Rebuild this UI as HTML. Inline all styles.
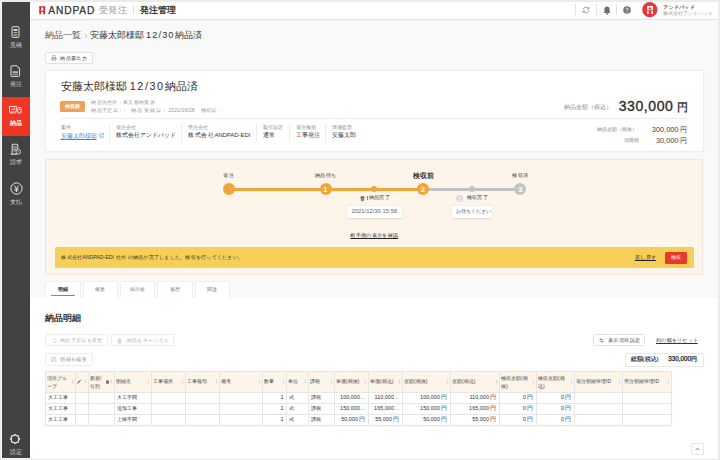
<!DOCTYPE html>
<html><head><meta charset="utf-8">
<style>
*{box-sizing:border-box;margin:0;padding:0}
html,body{width:720px;height:460px;overflow:hidden;background:#ebebeb;font-family:"Liberation Sans",sans-serif;color:#333}
.a{position:absolute}
#frame{position:absolute;left:1px;top:2px;width:717px;height:457px;background:#fafafa}
#side{position:absolute;left:2px;top:2px;width:28px;height:456px;background:#424242}
.si{position:absolute;left:0;width:28px;height:39px}
.si .lb{position:absolute;left:0;width:28px;text-align:center;top:22.6px;font-size:6.2px;line-height:7px;color:#dcdcdc;font-weight:500}
.si.act{background:#ee3626}
.si.act .lb{color:#fff;font-weight:bold}
#hdr{position:absolute;left:30px;top:2px;width:688px;height:17.5px;background:#fff;border-bottom:1px solid #e6e6e6}
#main{position:absolute;left:30px;top:19.5px;width:688px;height:438.5px;background:#f9f9f9}
.card{position:absolute;background:#fff;border:0.5px solid #efefef;border-radius:2px;box-shadow:0 0 1.2px rgba(0,0,0,0.09)}
.t{position:absolute;white-space:nowrap;line-height:1}
.nocjk .t{-webkit-text-stroke:0.25px currentColor}</style></head><body>
<div id="frame"></div>
<div id="side">
  <div class="si" style="top:16.3px">
    <svg class="a" style="left:8.5px;top:7.6px" width="10" height="13" viewBox="0 0 10 13"><rect x="1" y="0.7" width="7" height="10.7" rx="1" fill="none" stroke="#e0e0e0" stroke-width="1"></rect><rect x="2.5" y="3.1" width="3.9" height="1.7" fill="#f0f0f0"></rect><rect x="2.5" y="6.1" width="3.9" height="1" fill="#bdbdbd"></rect><rect x="2.5" y="8.1" width="3.9" height="1.8" fill="#9e9e9e"></rect></svg>
    <div class="lb">見積</div>
  </div>
  <div class="si" style="top:55.5px">
    <svg class="a" style="left:7.6px;top:7.3px" width="12" height="13" viewBox="0 0 12 13"><path d="M2 0.8h5l2.6 2.6v7a1 1 0 0 1-1 1H2a1 1 0 0 1-1-1V1.8a1 1 0 0 1 1-1z" fill="none" stroke="#e0e0e0" stroke-width="1"></path><circle cx="8" cy="3" r="0.6" fill="#cfcfcf"></circle><rect x="2.5" y="6.2" width="5.6" height="1.8" fill="#b0b0b0"></rect><rect x="2.5" y="8.7" width="5.6" height="0.9" fill="#d0d0d0"></rect></svg>
    <div class="lb">発注</div>
  </div>
  <div class="si act" style="top:94.7px;height:39.2px">
    <svg class="a" style="left:6px;top:8.3px" width="15" height="10" viewBox="0 0 15 10"><rect x="1.4" y="1.3" width="6.8" height="5.7" fill="none" stroke="#fff" stroke-width="0.8"></rect><path d="M4.5 3.1h2.6M3 4.6h4.1" stroke="#fff" stroke-width="0.6"></path><rect x="2.3" y="7.6" width="2" height="1" fill="#fff"></rect><path d="M4.5 8.1h3.5" stroke="#fde0dc" stroke-width="0.6"></path><rect x="9.8" y="2.4" width="3.2" height="5.8" rx="1" fill="none" stroke="#fff" stroke-width="0.8"></rect><circle cx="11.4" cy="4.2" r="0.6" fill="#fff"></circle></svg>
    <div class="lb">納品</div>
  </div>
  <div class="si" style="top:133.9px">
    <svg class="a" style="left:7px;top:7px" width="13" height="13" viewBox="0 0 13 13"><path d="M3.2 10.3V2.2a1 1 0 0 1 1-1h3.6a1 1 0 0 1 1 1v4.2" fill="none" stroke="#d8d8d8" stroke-width="1.1"></path><rect x="4.3" y="2.9" width="3.4" height="5.5" fill="#9a9a9a"></rect><path d="M4.6 3.9h2.8M4.6 5.2h2.8" stroke="#5a5a5a" stroke-width="0.5"></path><path d="M1.6 11.1h6.4" stroke="#e0e0e0" stroke-width="1.3"></path><circle cx="9.3" cy="8.8" r="2.3" fill="#424242" stroke="#d8d8d8" stroke-width="0.9"></circle><circle cx="9.3" cy="8.8" r="0.7" fill="#9a9a9a"></circle></svg>
    <div class="lb">請求</div>
  </div>
  <div class="si" style="top:173.1px">
    <svg class="a" style="left:8px;top:7px" width="13" height="13" viewBox="0 0 13 13"><circle cx="6.5" cy="6.5" r="5.6" fill="none" stroke="#e6e6e6" stroke-width="1"></circle><path d="M4.3 3.5l2.2 3 2.2-3M6.5 6.5v3.5M4.5 6.8h4M4.5 8.3h4" fill="none" stroke="#e6e6e6" stroke-width="0.9"></path></svg>
    <div class="lb">支払</div>
  </div>
  <div class="si" style="top:423px">
    <svg class="a" style="left:7.2px;top:7.5px" width="12" height="12" viewBox="0 0 12 12"><polygon points="6.00,0.70 7.65,2.03 9.75,2.25 9.97,4.35 11.30,6.00 9.97,7.65 9.75,9.75 7.65,9.97 6.00,11.30 4.35,9.97 2.25,9.75 2.03,7.65 0.70,6.00 2.03,4.35 2.25,2.25 4.35,2.03" fill="#e6e6e6"></polygon><circle cx="6" cy="6" r="3.2" fill="#424242"></circle></svg>
    <div class="lb">設定</div>
  </div>
</div>

<div id="hdr"></div>
<svg class="a" style="left:38.5px;top:5.5px" width="7" height="9" viewBox="0 0 7 9"><rect x="0.3" y="0.3" width="1.8" height="8" fill="#e8282e"></rect><rect x="4.2" y="0.3" width="1.8" height="8" fill="#e8282e"></rect><rect x="0.3" y="0.3" width="5.7" height="1.3" fill="#e8282e"></rect><rect x="0.3" y="4.7" width="5.7" height="1.1" fill="#d42a2a"></rect></svg>
<div class="t" style="left:48.2px;top:6px;font-size:10.2px;letter-spacing:0.9px;color:#333;-webkit-text-stroke:0.25px #333">ANDPAD</div>
<div class="t" style="left: 99.2px; top: 5.6px; font-size: 8.8px; letter-spacing: 0.2px; color: rgb(154, 154, 154); width: 26.8px; text-align: justify; text-align-last: justify;">受発注</div>
<div class="a" style="left:133px;top:5px;width:1px;height:9px;background:#dedede"></div>
<div class="t" style="left: 140px; top: 5.6px; font-size: 8.8px; font-weight: bold; color: rgb(51, 51, 51); width: 35.5px; text-align: justify; text-align-last: justify;">発注管理</div>
<div class="a" style="left:575px;top:4px;width:1px;height:11px;background:#e3e3e3"></div>
<div class="a" style="left:596px;top:4px;width:1px;height:11px;background:#e3e3e3"></div>
<div class="a" style="left:616px;top:4px;width:1px;height:11px;background:#e3e3e3"></div>
<svg class="a" style="left:582px;top:6px" width="8" height="8" viewBox="0 0 8 8"><path d="M1.2 3.4A2.9 2.9 0 0 1 6.3 2.3M6.8 4.6A2.9 2.9 0 0 1 1.7 5.7" fill="none" stroke="#8a8a8a" stroke-width="0.8"></path><path d="M6.9 1v2H4.9M1.1 7V5h2" fill="none" stroke="#8a8a8a" stroke-width="0.8"></path></svg>
<svg class="a" style="left:602.5px;top:5.5px" width="8" height="9" viewBox="0 0 8 9"><path d="M4 0.6c1.7 0 2.6 1.2 2.6 2.8v2.5l0.9 1.2H0.5l0.9-1.2V3.4C1.4 1.8 2.3 0.6 4 0.6z" fill="#6e6e6e"></path><circle cx="4" cy="7.9" r="0.9" fill="#6e6e6e"></circle></svg>
<svg class="a" style="left:622.5px;top:6px" width="8" height="8" viewBox="0 0 8 8"><circle cx="4" cy="4" r="3.8" fill="#777"></circle><path d="M2.9 3.1a1.1 1.1 0 1 1 1.6 1c-.4.2-.5.4-.5.8" fill="none" stroke="#fff" stroke-width="0.8"></path><circle cx="4" cy="6" r="0.5" fill="#fff"></circle></svg>
<svg class="a" style="left:642px;top:2px" width="16" height="16" viewBox="0 0 16 16"><circle cx="7.8" cy="7.7" r="7.6" fill="#e8383d"></circle><path d="M5 4h6v8h-1.6V9H6.6v3H5z M6.6 5.6v1.9h2.8V5.6z" fill="#fff" fill-rule="evenodd"></path><rect x="5" y="8.1" width="6" height="0.8" fill="#e8383d"></rect></svg>
<div class="t" style="left: 663.3px; top: 5px; font-size: 5.3px; font-weight: bold; color: rgb(85, 85, 85); width: 31.3px; text-align: justify; text-align-last: justify;">アンドパッド</div>
<div class="t" style="left: 663.3px; top: 11.7px; font-size: 4.65px; color: rgb(153, 153, 153); width: 44px; text-align: justify; text-align-last: justify;">株式会社アンドパッド</div>
<div id="main"></div>
<div class="t" style="left: 45px; top: 30.8px; font-size: 9.2px; color: rgb(85, 85, 85); width: 36px; text-align: justify; text-align-last: justify;">納品一覧</div>
<svg class="a" style="left:84px;top:33px" width="4" height="6" viewBox="0 0 4 6"><path d="M1 0.8L3 3 1 5.2" fill="none" stroke="#aaa" stroke-width="0.7"></path></svg>
<div class="t" style="left: 89.59px; top: 30.9px; font-size: 9px; font-weight: 500; color: rgb(51, 51, 51); width: 112px; text-align: justify; text-align-last: justify;">安藤太郎様邸<span style="font-size:9.2px;letter-spacing:1.1px;margin-left:2.5px">12/30</span>納品済</div>
<div class="a" style="left:45px;top:52px;width:47.5px;height:11.5px;background:#fff;border:1px solid #e2e2e2;border-radius:2px"></div>
<svg class="a" style="left:50.8px;top:54.9px" width="6" height="6.3" viewBox="0 0 6 6.3"><path d="M1.6 2.3V0.5h2.8v1.8" fill="none" stroke="#9a9a9a" stroke-width="0.6"></path><rect x="0.4" y="2.2" width="5.2" height="2.6" rx="0.7" fill="#a8a8a8"></rect><rect x="1.6" y="3.9" width="2.8" height="2" fill="#fff" stroke="#9a9a9a" stroke-width="0.6"></rect></svg>
<div class="t" style="left: 60.3px; top: 55.6px; font-size: 5.2px; color: rgb(68, 68, 68); width: 26.3px; text-align: justify; text-align-last: justify;">納品書出力</div>

<div class="card" style="left:44.6px;top:70px;width:659px;height:82.3px"></div>
<div class="t" style="left: 60.8px; top: 80.8px; font-size: 11px; font-weight: 500; color: rgb(44, 44, 44); width: 136.78px; text-align: justify; text-align-last: justify;">安藤太郎様邸<span style="font-size:10.8px;letter-spacing:1.55px;margin-left:3px">12/30</span>納品済</div>
<div class="a" style="left:60.3px;top:101.4px;width:24.7px;height:11px;background:#eba35c;border-radius:1.5px"></div>
<div class="t" style="left: 65.14px; top: 104.4px; width: 15px; text-align: justify; font-size: 5.1px; font-weight: bold; color: rgb(255, 255, 255); text-align-last: justify;">検収前</div>
<div class="t" style="left: 91.2px; top: 99.6px; font-size: 5.35px; color: rgb(153, 153, 153); width: 63.6px; text-align: justify; text-align-last: justify;">納品先住所：東京都秋葉原</div>
<div class="t" style="left: 91.2px; top: 108.4px; font-size: 5.27px; color: rgb(153, 153, 153); width: 34.1px; text-align: justify; text-align-last: justify;">納品予定日：-</div>
<div class="t" style="left: 131.2px; top: 108.4px; font-size: 5.27px; color: rgb(153, 153, 153); width: 63.5px; text-align: justify; text-align-last: justify;">納品実績日：2021/09/28</div>
<div class="t" style="left: 200.7px; top: 108.4px; font-size: 5.27px; color: rgb(153, 153, 153); width: 22.6px; text-align: justify; text-align-last: justify;">検収日：-</div>
<div class="a" style="left:60px;top:118px;width:627.5px;height:1px;background:#ececec"></div>
<div class="t" style="left: 563.8px; top: 104.9px; font-size: 5.5px; color: rgb(136, 136, 136); width: 44.6px; text-align: justify; text-align-last: justify;">納品金額（税込）</div>
<div class="t" style="left: 618.69px; width: 68.81px; text-align: justify; top: 98.6px; font-size: 14px; letter-spacing: 0.6px; color: rgb(44, 44, 44); -webkit-text-stroke: 0.35px rgb(44, 44, 44); text-align-last: justify;">330,000<span style="font-size:11px;margin-left:3px;letter-spacing:0">円</span></div>
<div class="t" style="left: 597px; top: 128.4px; font-size: 4.9px; color: rgb(136, 136, 136); width: 39.3px; text-align: justify; text-align-last: justify;">納品金額（税抜）</div>
<div class="t" style="left: 651.78px; width: 35.72px; text-align: justify; top: 126.4px; font-size: 7.4px; color: rgb(68, 68, 68); text-align-last: justify;">300,000<span style="font-size:6.6px;margin-left:2px">円</span></div>
<div class="t" style="left: 623.69px; top: 138.6px; font-size: 4.9px; color: rgb(136, 136, 136); width: 15px; text-align: justify; text-align-last: justify;">消費税</div>
<div class="t" style="left: 655.89px; width: 31.61px; text-align: justify; top: 136.5px; font-size: 7.4px; color: rgb(68, 68, 68); text-align-last: justify;">30,000<span style="font-size:6.6px;margin-left:2px">円</span></div>

<div class="t" style="left: 60.5px; top: 125.4px; font-size: 5px; color: rgb(136, 136, 136); width: 10px; text-align: justify; text-align-last: justify;">案件</div>
<div class="t" style="left: 60.5px; top: 133px; font-size: 6px; color: rgb(61, 136, 220); text-decoration: underline 0.5px; text-underline-offset: 1px; width: 36px; text-align: justify; text-align-last: justify;">安藤太郎様邸</div>
<svg class="a" style="left:98.5px;top:133px" width="5" height="5" viewBox="0 0 5 5"><path d="M2 0.8H0.8v3.4h3.4V3M2.8 0.6h1.6v1.6M4.4 0.6L2.2 2.8" fill="none" stroke="#3c7fd8" stroke-width="0.55"></path></svg>
<div class="a" style="left:109px;top:124px;width:1px;height:18px;background:#ececec"></div>
<div class="t" style="left: 116.3px; top: 125.4px; font-size: 5px; color: rgb(136, 136, 136); width: 20px; text-align: justify; text-align-last: justify;">発注会社</div>
<div class="t" style="left: 116.3px; top: 133px; font-size: 5.9px; color: rgb(51, 51, 51); width: 59.1px; text-align: justify; text-align-last: justify;">株式会社アンドパッド</div>
<div class="a" style="left:180.9px;top:124px;width:1px;height:18px;background:#ececec"></div>
<div class="t" style="left: 188px; top: 125.4px; font-size: 5px; color: rgb(136, 136, 136); width: 20px; text-align: justify; text-align-last: justify;">受注会社</div>
<div class="t" style="left: 188px; top: 133px; font-size: 5.9px; color: rgb(51, 51, 51); width: 62.3px; text-align: justify; text-align-last: justify;">株式会社ANDPAD-EDI</div>
<div class="a" style="left:255.9px;top:124px;width:1px;height:18px;background:#ececec"></div>
<div class="t" style="left: 262.8px; top: 125.4px; font-size: 5px; color: rgb(136, 136, 136); width: 20px; text-align: justify; text-align-last: justify;">取引設定</div>
<div class="t" style="left: 262.8px; top: 133px; font-size: 5.9px; color: rgb(51, 51, 51); width: 12px; text-align: justify; text-align-last: justify;">通常</div>
<div class="a" style="left:289.2px;top:124px;width:1px;height:18px;background:#ececec"></div>
<div class="t" style="left: 296px; top: 125.4px; font-size: 5px; color: rgb(136, 136, 136); width: 20px; text-align: justify; text-align-last: justify;">発注種別</div>
<div class="t" style="left: 296px; top: 133px; font-size: 5.9px; color: rgb(51, 51, 51); width: 23.5px; text-align: justify; text-align-last: justify;">工事発注</div>
<div class="a" style="left:325.3px;top:124px;width:1px;height:18px;background:#ececec"></div>
<div class="t" style="left: 332px; top: 125.4px; font-size: 5px; color: rgb(136, 136, 136); width: 20px; text-align: justify; text-align-last: justify;">現場監督</div>
<div class="t" style="left: 332px; top: 133px; font-size: 5.9px; color: rgb(51, 51, 51); width: 23.8px; text-align: justify; text-align-last: justify;">安藤太郎</div>


<div class="a" style="left:44.7px;top:158.8px;width:658.6px;height:115.8px;background:#fdf5ea;border:0.5px solid #f0e8dc;border-radius:2px;box-shadow:0 0 1.2px rgba(0,0,0,0.08)"></div>
<div class="a" style="left:228px;top:187.5px;width:195px;height:3.5px;background:#f0a43a"></div>
<div class="a" style="left:423px;top:187.5px;width:97px;height:3.5px;background:#c2c2c2"></div>
<div class="a" style="left:222.6px;top:183.1px;width:12px;height:12px;border-radius:50%;background:#f0a43a"></div>
<div class="a" style="left:319.5px;top:183.3px;width:12px;height:12px;border-radius:50%;background:#f0a43a"></div>
<div class="t" style="left:319.5px;top:185.7px;width:12px;text-align:center;font-size:7.8px;font-weight:bold;color:#fff">1</div>
<div class="a" style="left:371.4px;top:186.3px;width:6px;height:6px;border-radius:50%;background:#f0a43a"></div>
<div class="a" style="left:416.8px;top:183.3px;width:12px;height:12px;border-radius:50%;background:#f0a43a"></div>
<div class="t" style="left:416.8px;top:185.7px;width:12px;text-align:center;font-size:7.8px;font-weight:bold;color:#fff">2</div>
<div class="a" style="left:469px;top:186.3px;width:6px;height:6px;border-radius:50%;background:#c2c2c2"></div>
<div class="a" style="left:514.3px;top:183.3px;width:12px;height:12px;border-radius:50%;background:#c2c2c2"></div>
<div class="t" style="left:514.3px;top:185.7px;width:12px;text-align:center;font-size:7.8px;font-weight:bold;color:#fff">3</div>
<div class="t" style="left: 222.8px; top: 172.8px; width: 11.2px; text-align: justify; font-size: 5.3px; font-weight: 500; color: rgb(51, 51, 51); text-align-last: justify;">発注</div>
<div class="t" style="left: 314.8px; top: 172.8px; width: 21.2px; text-align: justify; font-size: 5.3px; font-weight: 500; color: rgb(51, 51, 51); text-align-last: justify;">納品待ち</div>
<div class="t" style="left: 412.6px; top: 173px; width: 20.2px; text-align: justify; font-size: 6.9px; font-weight: bold; color: rgb(51, 51, 51); text-align-last: justify;">検収前</div>
<div class="t" style="left: 512.3px; top: 172.8px; width: 16.2px; text-align: justify; font-size: 5.3px; font-weight: 500; color: rgb(51, 51, 51); text-align-last: justify;">検収済</div>
<svg class="a" style="left:359.3px;top:195px" width="7" height="7" viewBox="0 0 7 7"><circle cx="3.5" cy="3.5" r="3.4" fill="#f2f2f2"></circle><path d="M1.3 3.2c0-1.3 1-2.1 2.2-2.1s2.2.8 2.2 2.1z" fill="#6b6b6b"></path><ellipse cx="3.5" cy="4.4" rx="1.7" ry="1.9" fill="#b07a4e"></ellipse></svg>
<div class="a" style="left:367.3px;top:195.8px;width:0.6px;height:4px;background:#4a9ad8"></div>
<div class="t" style="left: 368.8px; top: 195.2px; font-size: 5.1px; font-weight: 500; color: rgb(51, 51, 51); width: 20.9px; text-align: justify; text-align-last: justify;">納品完了</div>
<div class="a" style="left:346.9px;top:205.8px;width:54.8px;height:12.2px;background:#fff;border-radius:1.5px;box-shadow:0 0.5px 2px rgba(0,0,0,0.12)"></div>
<div class="a" style="left:372.4px;top:203.3px;width:0;height:0;border-left:2.5px solid transparent;border-right:2.5px solid transparent;border-bottom:2.5px solid #fff"></div>
<div class="t" style="left:351.4px;top:209.2px;font-size:5.9px;color:#666">2021/12/30 15:58</div>
<svg class="a" style="left:456.4px;top:194.5px" width="7" height="7" viewBox="0 0 7 7"><circle cx="3.5" cy="3.5" r="3.5" fill="#d6d6d6"></circle><circle cx="3.5" cy="2.7" r="1.3" fill="#ececec"></circle><path d="M1.3 6.2c0.3-1.3 1.1-2 2.2-2s1.9.7 2.2 2z" fill="#ececec"></path></svg>
<div class="t" style="left: 466.5px; top: 195.4px; font-size: 5.1px; font-weight: 500; color: rgb(51, 51, 51); width: 21px; text-align: justify; text-align-last: justify;">検収完了</div>
<div class="a" style="left:451.8px;top:205.7px;width:39.9px;height:12.3px;background:#fff;border-radius:1.5px;box-shadow:0 0.5px 2px rgba(0,0,0,0.12)"></div>
<div class="a" style="left:469.5px;top:203.3px;width:0;height:0;border-left:2.5px solid transparent;border-right:2.5px solid transparent;border-bottom:2.5px solid #fff"></div>
<div class="t" style="left: 455.8px; top: 209.6px; font-size: 4.5px; color: rgb(85, 85, 85); width: 31.7px; text-align: justify; text-align-last: justify;">お待ちください</div>
<div class="t" style="left: 350.3px; top: 232.8px; font-size: 5.25px; font-weight: 500; color: rgb(34, 34, 34); text-decoration: underline 0.5px; text-underline-offset: 1px; width: 47.8px; text-align: justify; text-align-last: justify;">相手側の表示を確認</div>
<div class="a" style="left:55px;top:247px;width:639px;height:20.8px;background:#f5cf57;border-radius:1px"></div>
<div class="t" style="left: 61.3px; top: 254.6px; font-size: 5.2px; color: rgb(51, 51, 51); width: 181.5px; text-align: justify; text-align-last: justify;">株式会社ANDPAD-EDI 社外 の納品が完了しました。検収を行ってください。</div>
<div class="t" style="left: 634.8px; top: 254.9px; font-size: 5.2px; font-weight: 500; color: rgb(34, 34, 34); text-decoration: underline 0.5px; text-underline-offset: 1px; width: 21.3px; text-align: justify; text-align-last: justify;">差し戻す</div>
<div class="a" style="left:665px;top:251.7px;width:22.3px;height:12px;background:#e8392b;border-radius:1.5px"></div>
<div class="t" style="left: 671.14px; top: 255.1px; width: 10px; text-align: justify; font-size: 5.2px; color: rgb(255, 255, 255); text-align-last: justify;">検収</div>


<div class="a" style="left:30px;top:298px;width:688px;height:160px;background:#fff"></div>
<div class="a" style="left:45px;top:281px;width:35.5px;height:17.3px;background:#fff;border:1px solid #efefef;border-bottom:none;border-radius:2px 2px 0 0"></div>
<div class="t" style="left: 57.64px; top: 286.8px; width: 10px; text-align: justify; font-size: 5.3px; font-weight: bold; color: rgb(51, 51, 51); text-align-last: justify;">明細</div>
<div class="a" style="left:50.8px;top:295px;width:23.8px;height:1.1px;background:#f05a50"></div>
<div class="a" style="left:82.5px;top:281px;width:35.5px;height:17.3px;background:#fff;border:1px solid #efefef;border-bottom:none;border-radius:2px 2px 0 0"></div>
<div class="t" style="left: 95.14px; top: 286.8px; width: 10px; text-align: justify; font-size: 5.3px; color: rgb(136, 136, 136); text-align-last: justify;">概要</div>
<div class="a" style="left:119.9px;top:281px;width:35.5px;height:17.3px;background:#fff;border:1px solid #efefef;border-bottom:none;border-radius:2px 2px 0 0"></div>
<div class="t" style="left: 130.03px; top: 286.8px; width: 15px; text-align: justify; font-size: 5.3px; color: rgb(136, 136, 136); text-align-last: justify;">掲示板</div>
<div class="a" style="left:157.3px;top:281px;width:35.5px;height:17.3px;background:#fff;border:1px solid #efefef;border-bottom:none;border-radius:2px 2px 0 0"></div>
<div class="t" style="left: 169.94px; top: 286.8px; width: 10px; text-align: justify; font-size: 5.3px; color: rgb(136, 136, 136); text-align-last: justify;">履歴</div>
<div class="a" style="left:194.8px;top:281px;width:35.5px;height:17.3px;background:#fff;border:1px solid #efefef;border-bottom:none;border-radius:2px 2px 0 0"></div>
<div class="t" style="left: 207.44px; top: 286.8px; width: 10px; text-align: justify; font-size: 5.3px; color: rgb(136, 136, 136); text-align-last: justify;">関連</div>

<div class="t" style="left: 44.8px; top: 314.2px; font-size: 9px; font-weight: bold; color: rgb(51, 51, 51); width: 36.2px; text-align: justify; text-align-last: justify;">納品明細</div>
<div class="a" style="left:44.8px;top:334.4px;width:63.6px;height:11.7px;border:1px solid #ececec;border-radius:1.5px;background:#fff"></div>
<svg class="a" style="left:51.5px;top:337.8px" width="5.4" height="5.4" viewBox="0 0 6 6"><path d="M1 2.4A2.2 2.2 0 0 1 5 2M5 3.6A2.2 2.2 0 0 1 1 4" fill="none" stroke="#c4c4c4" stroke-width="0.7"></path></svg>
<div class="t" style="left: 60.2px; top: 337.7px; font-size: 5.2px; color: rgb(180, 180, 180); width: 42.1px; text-align: justify; text-align-last: justify;">納品予定日を変更</div>
<div class="a" style="left:111.4px;top:334.4px;width:63px;height:11.7px;border:1px solid #ececec;border-radius:1.5px;background:#fff"></div>
<svg class="a" style="left:117.2px;top:337.5px" width="5" height="6" viewBox="0 0 5 6"><rect x="0.8" y="1.2" width="3.4" height="4.4" rx="0.6" fill="#d4d4d4"></rect><rect x="1.5" y="0.3" width="2" height="0.8" fill="#d4d4d4"></rect></svg>
<div class="t" style="left: 126.6px; top: 337.7px; font-size: 5.25px; color: rgb(180, 180, 180); width: 42.6px; text-align: justify; text-align-last: justify;">納品をキャンセル</div>
<div class="a" style="left:44.8px;top:353.3px;width:47.8px;height:12.3px;border:1px solid #ececec;border-radius:1.5px;background:#fff"></div>
<svg class="a" style="left:51.3px;top:356.9px" width="5.4" height="5.4" viewBox="0 0 6 6"><rect x="0.5" y="0.5" width="5" height="5" rx="0.8" fill="none" stroke="#aaa" stroke-width="0.6"></rect><path d="M1.8 4.3L4.4 1.7" stroke="#999" stroke-width="0.7"></path></svg>
<div class="t" style="left: 60.2px; top: 357px; font-size: 5.2px; color: rgb(153, 153, 153); width: 26.5px; text-align: justify; text-align-last: justify;">明細を編集</div>

<div class="a" style="left:593.3px;top:334.2px;width:52.2px;height:12px;border:1px solid #e2e2e2;border-radius:1.5px;background:#fff"></div>
<svg class="a" style="left:598.5px;top:337.6px" width="5" height="5" viewBox="0 0 5 5"><path d="M0.4 1.4h4.2M0.4 3.6h4.2" stroke="#666" stroke-width="0.55"></path><rect x="1.2" y="0.7" width="1" height="1.4" fill="#666"></rect><rect x="2.8" y="2.9" width="1" height="1.4" fill="#666"></rect></svg>
<div class="t" style="left: 607.8px; top: 337.6px; font-size: 5.3px; font-weight: 500; color: rgb(51, 51, 51); width: 32.5px; text-align: justify; text-align-last: justify;">表示項目設定</div>
<div class="t" style="left: 656px; top: 337.6px; font-size: 5.2px; color: rgb(51, 51, 51); text-decoration: underline 0.5px; text-underline-offset: 1px; width: 41.8px; text-align: justify; text-align-last: justify;">列の幅をリセット</div>
<div class="a" style="left:625.3px;top:352.5px;width:78.4px;height:14.5px;border:1px solid #e8e8e8;border-radius:1.5px;background:#fff"></div>
<div class="t" style="left: 630.6px; top: 356.6px; font-size: 5.9px; font-weight: 500; color: rgb(34, 34, 34); -webkit-text-stroke: 0.15px rgb(34, 34, 34); width: 25.5px; text-align: justify; text-align-last: justify;">総額(税込)</div>
<div class="t" style="left: 668.3px; top: 356.3px; font-size: 6.3px; color: rgb(34, 34, 34); -webkit-text-stroke: 0.25px rgb(34, 34, 34); width: 28.77px; text-align: justify; text-align-last: justify;">330,000円</div>

<div class="a" style="left:45px;top:371px;width:626px;height:21px;background:#fdf5ea"></div>
<div class="a" style="left:45px;top:371px;width:627px;height:55px;box-shadow:0 0.6px 1.5px rgba(0,0,0,0.06)"></div>
<div class="a" style="left:45px;top:371px;width:627px;height:1px;background:#e6e6e6"></div>
<div class="a" style="left:45px;top:392px;width:627px;height:1px;background:#e6e6e6"></div>
<div class="a" style="left:45px;top:403px;width:627px;height:1px;background:#e6e6e6"></div>
<div class="a" style="left:45px;top:414px;width:627px;height:1px;background:#e6e6e6"></div>
<div class="a" style="left:45px;top:425px;width:627px;height:1px;background:#e6e6e6"></div>
<div class="a" style="left:45px;top:371px;width:1px;height:55px;background:#e6e6e6"></div>
<div class="a" style="left:75px;top:371px;width:1px;height:55px;background:#e6e6e6"></div>
<div class="a" style="left:88px;top:371px;width:1px;height:55px;background:#e6e6e6"></div>
<div class="a" style="left:114px;top:371px;width:1px;height:55px;background:#e6e6e6"></div>
<div class="a" style="left:151px;top:371px;width:1px;height:55px;background:#e6e6e6"></div>
<div class="a" style="left:185px;top:371px;width:1px;height:55px;background:#e6e6e6"></div>
<div class="a" style="left:219px;top:371px;width:1px;height:55px;background:#e6e6e6"></div>
<div class="a" style="left:262px;top:371px;width:1px;height:55px;background:#e6e6e6"></div>
<div class="a" style="left:286px;top:371px;width:1px;height:55px;background:#e6e6e6"></div>
<div class="a" style="left:308px;top:371px;width:1px;height:55px;background:#e6e6e6"></div>
<div class="a" style="left:334px;top:371px;width:1px;height:55px;background:#e6e6e6"></div>
<div class="a" style="left:368px;top:371px;width:1px;height:55px;background:#e6e6e6"></div>
<div class="a" style="left:402px;top:371px;width:1px;height:55px;background:#e6e6e6"></div>
<div class="a" style="left:450px;top:371px;width:1px;height:55px;background:#e6e6e6"></div>
<div class="a" style="left:499px;top:371px;width:1px;height:55px;background:#e6e6e6"></div>
<div class="a" style="left:536px;top:371px;width:1px;height:55px;background:#e6e6e6"></div>
<div class="a" style="left:574px;top:371px;width:1px;height:55px;background:#e6e6e6"></div>
<div class="a" style="left:622px;top:371px;width:1px;height:55px;background:#e6e6e6"></div>
<div class="a" style="left:671px;top:371px;width:1px;height:55px;background:#e6e6e6"></div>
<div class="t" style="left: 47px; top: 375px; font-size: 5.1px; line-height: 7.5px; color: rgb(68, 68, 68); font-weight: 500; width: 20px; text-align: justify; text-align-last: left;">項目グル<br>ープ</div>
<svg class="a" style="left:70.90px;top:379.4px" width="3" height="5" viewBox="0 0 3 5"><path d="M0.3 2L1.5 0.6 2.7 2zM0.3 3L1.5 4.4 2.7 3z" fill="#cccccc"></path></svg>
<svg class="a" style="left:83.90px;top:379.4px" width="3" height="5" viewBox="0 0 3 5"><path d="M0.3 2L1.5 0.6 2.7 2zM0.3 3L1.5 4.4 2.7 3z" fill="#cccccc"></path></svg>
<div class="t" style="left: 90px; top: 375px; font-size: 5.1px; line-height: 7.5px; color: rgb(68, 68, 68); font-weight: 500; width: 11.42px; text-align: justify; text-align-last: left;">新規/<br>分割</div>
<svg class="a" style="left:109.90px;top:379.4px" width="3" height="5" viewBox="0 0 3 5"><path d="M0.3 2L1.5 0.6 2.7 2zM0.3 3L1.5 4.4 2.7 3z" fill="#cccccc"></path></svg>
<div class="t" style="left: 116px; top: 379.3px; font-size: 5.1px; color: rgb(68, 68, 68); font-weight: 500; width: 15px; text-align: justify; text-align-last: justify;">明細名</div>
<svg class="a" style="left:146.90px;top:379.4px" width="3" height="5" viewBox="0 0 3 5"><path d="M0.3 2L1.5 0.6 2.7 2zM0.3 3L1.5 4.4 2.7 3z" fill="#cccccc"></path></svg>
<div class="t" style="left: 153px; top: 379.3px; font-size: 5.1px; color: rgb(68, 68, 68); font-weight: 500; width: 20px; text-align: justify; text-align-last: justify;">工事場所</div>
<svg class="a" style="left:180.90px;top:379.4px" width="3" height="5" viewBox="0 0 3 5"><path d="M0.3 2L1.5 0.6 2.7 2zM0.3 3L1.5 4.4 2.7 3z" fill="#cccccc"></path></svg>
<div class="t" style="left: 187px; top: 379.3px; font-size: 5.1px; color: rgb(68, 68, 68); font-weight: 500; width: 20px; text-align: justify; text-align-last: justify;">工事種類</div>
<svg class="a" style="left:214.90px;top:379.4px" width="3" height="5" viewBox="0 0 3 5"><path d="M0.3 2L1.5 0.6 2.7 2zM0.3 3L1.5 4.4 2.7 3z" fill="#cccccc"></path></svg>
<div class="t" style="left: 221px; top: 379.3px; font-size: 5.1px; color: rgb(68, 68, 68); font-weight: 500; width: 10px; text-align: justify; text-align-last: justify;">備考</div>
<svg class="a" style="left:257.90px;top:379.4px" width="3" height="5" viewBox="0 0 3 5"><path d="M0.3 2L1.5 0.6 2.7 2zM0.3 3L1.5 4.4 2.7 3z" fill="#cccccc"></path></svg>
<div class="t" style="left: 264px; top: 379.3px; font-size: 5.1px; color: rgb(68, 68, 68); font-weight: 500; width: 10px; text-align: justify; text-align-last: justify;">数量</div>
<svg class="a" style="left:281.90px;top:379.4px" width="3" height="5" viewBox="0 0 3 5"><path d="M0.3 2L1.5 0.6 2.7 2zM0.3 3L1.5 4.4 2.7 3z" fill="#cccccc"></path></svg>
<div class="t" style="left: 288px; top: 379.3px; font-size: 5.1px; color: rgb(68, 68, 68); font-weight: 500; width: 10px; text-align: justify; text-align-last: justify;">単位</div>
<svg class="a" style="left:303.90px;top:379.4px" width="3" height="5" viewBox="0 0 3 5"><path d="M0.3 2L1.5 0.6 2.7 2zM0.3 3L1.5 4.4 2.7 3z" fill="#cccccc"></path></svg>
<div class="t" style="left: 310px; top: 379.3px; font-size: 5.1px; color: rgb(68, 68, 68); font-weight: 500; width: 10px; text-align: justify; text-align-last: justify;">課税</div>
<svg class="a" style="left:329.90px;top:379.4px" width="3" height="5" viewBox="0 0 3 5"><path d="M0.3 2L1.5 0.6 2.7 2zM0.3 3L1.5 4.4 2.7 3z" fill="#cccccc"></path></svg>
<div class="t" style="left: 336px; top: 379.3px; font-size: 5.1px; color: rgb(68, 68, 68); font-weight: 500; width: 23.41px; text-align: justify; text-align-last: justify;">単価(税抜)</div>
<svg class="a" style="left:363.90px;top:379.4px" width="3" height="5" viewBox="0 0 3 5"><path d="M0.3 2L1.5 0.6 2.7 2zM0.3 3L1.5 4.4 2.7 3z" fill="#cccccc"></path></svg>
<div class="t" style="left: 370px; top: 379.3px; font-size: 5.1px; color: rgb(68, 68, 68); font-weight: 500; width: 23.41px; text-align: justify; text-align-last: justify;">単価(税込)</div>
<svg class="a" style="left:397.90px;top:379.4px" width="3" height="5" viewBox="0 0 3 5"><path d="M0.3 2L1.5 0.6 2.7 2zM0.3 3L1.5 4.4 2.7 3z" fill="#cccccc"></path></svg>
<div class="t" style="left: 404px; top: 379.3px; font-size: 5.1px; color: rgb(68, 68, 68); font-weight: 500; width: 23.41px; text-align: justify; text-align-last: justify;">金額(税抜)</div>
<svg class="a" style="left:445.90px;top:379.4px" width="3" height="5" viewBox="0 0 3 5"><path d="M0.3 2L1.5 0.6 2.7 2zM0.3 3L1.5 4.4 2.7 3z" fill="#cccccc"></path></svg>
<div class="t" style="left: 452px; top: 379.3px; font-size: 5.1px; color: rgb(68, 68, 68); font-weight: 500; width: 23.41px; text-align: justify; text-align-last: justify;">金額(税込)</div>
<svg class="a" style="left:494.90px;top:379.4px" width="3" height="5" viewBox="0 0 3 5"><path d="M0.3 2L1.5 0.6 2.7 2zM0.3 3L1.5 4.4 2.7 3z" fill="#cccccc"></path></svg>
<div class="t" style="left: 501px; top: 375px; font-size: 5.1px; line-height: 7.5px; color: rgb(68, 68, 68); font-weight: 500; width: 26.7px; text-align: justify; text-align-last: left;">検収金額(税<br>抜)</div>
<svg class="a" style="left:531.90px;top:379.4px" width="3" height="5" viewBox="0 0 3 5"><path d="M0.3 2L1.5 0.6 2.7 2zM0.3 3L1.5 4.4 2.7 3z" fill="#cccccc"></path></svg>
<div class="t" style="left: 538px; top: 375px; font-size: 5.1px; line-height: 7.5px; color: rgb(68, 68, 68); font-weight: 500; width: 26.7px; text-align: justify; text-align-last: left;">検収金額(税<br>込)</div>
<svg class="a" style="left:569.90px;top:379.4px" width="3" height="5" viewBox="0 0 3 5"><path d="M0.3 2L1.5 0.6 2.7 2zM0.3 3L1.5 4.4 2.7 3z" fill="#cccccc"></path></svg>
<div class="t" style="left: 576px; top: 379.3px; font-size: 5.1px; color: rgb(68, 68, 68); font-weight: 500; width: 35.09px; text-align: justify; text-align-last: justify;">発注明細管理ID</div>
<svg class="a" style="left:617.90px;top:379.4px" width="3" height="5" viewBox="0 0 3 5"><path d="M0.3 2L1.5 0.6 2.7 2zM0.3 3L1.5 4.4 2.7 3z" fill="#cccccc"></path></svg>
<div class="t" style="left: 624px; top: 379.3px; font-size: 5.1px; color: rgb(68, 68, 68); font-weight: 500; width: 35.09px; text-align: justify; text-align-last: justify;">受注明細管理ID</div>
<svg class="a" style="left:666.90px;top:379.4px" width="3" height="5" viewBox="0 0 3 5"><path d="M0.3 2L1.5 0.6 2.7 2zM0.3 3L1.5 4.4 2.7 3z" fill="#cccccc"></path></svg>
<svg class="a" style="left:77.4px;top:379px" width="4.5" height="5" viewBox="0 0 4.5 5"><path d="M0.6 4.4L3.6 0.9" stroke="#222" stroke-width="0.9"></path></svg>
<div class="a" style="left:105.6px;top:380.1px;width:3.6px;height:3.6px;border-radius:50%;background:#777"></div>
<div class="t" style="left: 47.5px; top: 394.7px; font-size: 5.2px; color: rgb(51, 51, 51); width: 20px; text-align: justify; text-align-last: justify;">大工工事</div>
<div class="t" style="left: 116.5px; top: 394.7px; font-size: 5.2px; color: rgb(51, 51, 51); width: 20px; text-align: justify; text-align-last: justify;">大工手間</div>
<div class="t" style="left:262.50px;width:21.00px;text-align:right;top:394.70px;font-size:5.5px;color:#333">1</div>
<div class="t" style="left: 288.5px; top: 394.7px; font-size: 5.2px; color: rgb(51, 51, 51); width: 5px; text-align: justify; text-align-last: justify;">式</div>
<div class="t" style="left: 310.5px; top: 394.7px; font-size: 5.2px; color: rgb(51, 51, 51); width: 10px; text-align: justify; text-align-last: justify;">課税</div>
<div class="t" style="left:334.50px;width:31.00px;text-align:right;top:394.70px;font-size:5.5px;color:#333">100,000…</div>
<div class="t" style="left:368.50px;width:31.00px;text-align:right;top:394.70px;font-size:5.5px;color:#333">110,000…</div>
<div class="t" style="left: 420.08px; width: 27.42px; text-align: justify; top: 394.7px; font-size: 5.5px; color: rgb(51, 51, 51); text-align-last: justify;">100,000 円</div>
<div class="t" style="left: 469.48px; width: 27.02px; text-align: justify; top: 394.7px; font-size: 5.5px; color: rgb(51, 51, 51); text-align-last: justify;">110,000 円</div>
<div class="t" style="left: 522.91px; width: 10.59px; text-align: justify; top: 394.7px; font-size: 5.5px; color: rgb(51, 51, 51); text-align-last: justify;">0 円</div>
<div class="t" style="left: 560.91px; width: 10.59px; text-align: justify; top: 394.7px; font-size: 5.5px; color: rgb(51, 51, 51); text-align-last: justify;">0 円</div>
<div class="t" style="left: 47.5px; top: 405.8px; font-size: 5.2px; color: rgb(51, 51, 51); width: 20px; text-align: justify; text-align-last: justify;">大工工事</div>
<div class="t" style="left: 116.5px; top: 405.8px; font-size: 5.2px; color: rgb(51, 51, 51); width: 20px; text-align: justify; text-align-last: justify;">追加工事</div>
<div class="t" style="left:262.50px;width:21.00px;text-align:right;top:405.80px;font-size:5.5px;color:#333">1</div>
<div class="t" style="left: 288.5px; top: 405.8px; font-size: 5.2px; color: rgb(51, 51, 51); width: 5px; text-align: justify; text-align-last: justify;">式</div>
<div class="t" style="left: 310.5px; top: 405.8px; font-size: 5.2px; color: rgb(51, 51, 51); width: 10px; text-align: justify; text-align-last: justify;">課税</div>
<div class="t" style="left:334.50px;width:31.00px;text-align:right;top:405.80px;font-size:5.5px;color:#333">150,000…</div>
<div class="t" style="left:368.50px;width:31.00px;text-align:right;top:405.80px;font-size:5.5px;color:#333">165,000…</div>
<div class="t" style="left: 420.08px; width: 27.42px; text-align: justify; top: 405.8px; font-size: 5.5px; color: rgb(51, 51, 51); text-align-last: justify;">150,000 円</div>
<div class="t" style="left: 469.08px; width: 27.42px; text-align: justify; top: 405.8px; font-size: 5.5px; color: rgb(51, 51, 51); text-align-last: justify;">165,000 円</div>
<div class="t" style="left: 522.91px; width: 10.59px; text-align: justify; top: 405.8px; font-size: 5.5px; color: rgb(51, 51, 51); text-align-last: justify;">0 円</div>
<div class="t" style="left: 560.91px; width: 10.59px; text-align: justify; top: 405.8px; font-size: 5.5px; color: rgb(51, 51, 51); text-align-last: justify;">0 円</div>
<div class="t" style="left: 47.5px; top: 417.2px; font-size: 5.2px; color: rgb(51, 51, 51); width: 20px; text-align: justify; text-align-last: justify;">大工工事</div>
<div class="t" style="left: 116.5px; top: 417.2px; font-size: 5.2px; color: rgb(51, 51, 51); width: 20px; text-align: justify; text-align-last: justify;">上棟手間</div>
<div class="t" style="left:262.50px;width:21.00px;text-align:right;top:417.20px;font-size:5.5px;color:#333">1</div>
<div class="t" style="left: 288.5px; top: 417.2px; font-size: 5.2px; color: rgb(51, 51, 51); width: 5px; text-align: justify; text-align-last: justify;">式</div>
<div class="t" style="left: 310.5px; top: 417.2px; font-size: 5.2px; color: rgb(51, 51, 51); width: 10px; text-align: justify; text-align-last: justify;">課税</div>
<div class="t" style="left: 341.14px; width: 24.36px; text-align: justify; top: 417.2px; font-size: 5.5px; color: rgb(51, 51, 51); text-align-last: justify;">50,000 円</div>
<div class="t" style="left: 375.14px; width: 24.36px; text-align: justify; top: 417.2px; font-size: 5.5px; color: rgb(51, 51, 51); text-align-last: justify;">55,000 円</div>
<div class="t" style="left: 423.14px; width: 24.36px; text-align: justify; top: 417.2px; font-size: 5.5px; color: rgb(51, 51, 51); text-align-last: justify;">50,000 円</div>
<div class="t" style="left: 472.14px; width: 24.36px; text-align: justify; top: 417.2px; font-size: 5.5px; color: rgb(51, 51, 51); text-align-last: justify;">55,000 円</div>
<div class="t" style="left: 522.91px; width: 10.59px; text-align: justify; top: 417.2px; font-size: 5.5px; color: rgb(51, 51, 51); text-align-last: justify;">0 円</div>
<div class="t" style="left: 560.91px; width: 10.59px; text-align: justify; top: 417.2px; font-size: 5.5px; color: rgb(51, 51, 51); text-align-last: justify;">0 円</div>
<div class="a" style="left:691.4px;top:443.4px;width:12.2px;height:12px;border:1px solid #e4e4e4;border-radius:1.5px;background:#fff"></div>
<svg class="a" style="left:695px;top:447px" width="5" height="4" viewBox="0 0 5 4"><path d="M0.8 3L2.5 1.2 4.2 3" fill="none" stroke="#555" stroke-width="0.7"></path></svg>


<script>
(function(){try{var c=document.createElement('canvas').getContext('2d');c.font='40px "Liberation Sans"';
var a=c.measureText('\u7d0d').width,b=c.measureText('\u54c1').width,z=c.measureText('\uffff').width;
if(Math.abs(a-z)<0.5&&Math.abs(b-z)<0.5){document.documentElement.className+=' nocjk';}}catch(e){}})();
</script></body></html>
